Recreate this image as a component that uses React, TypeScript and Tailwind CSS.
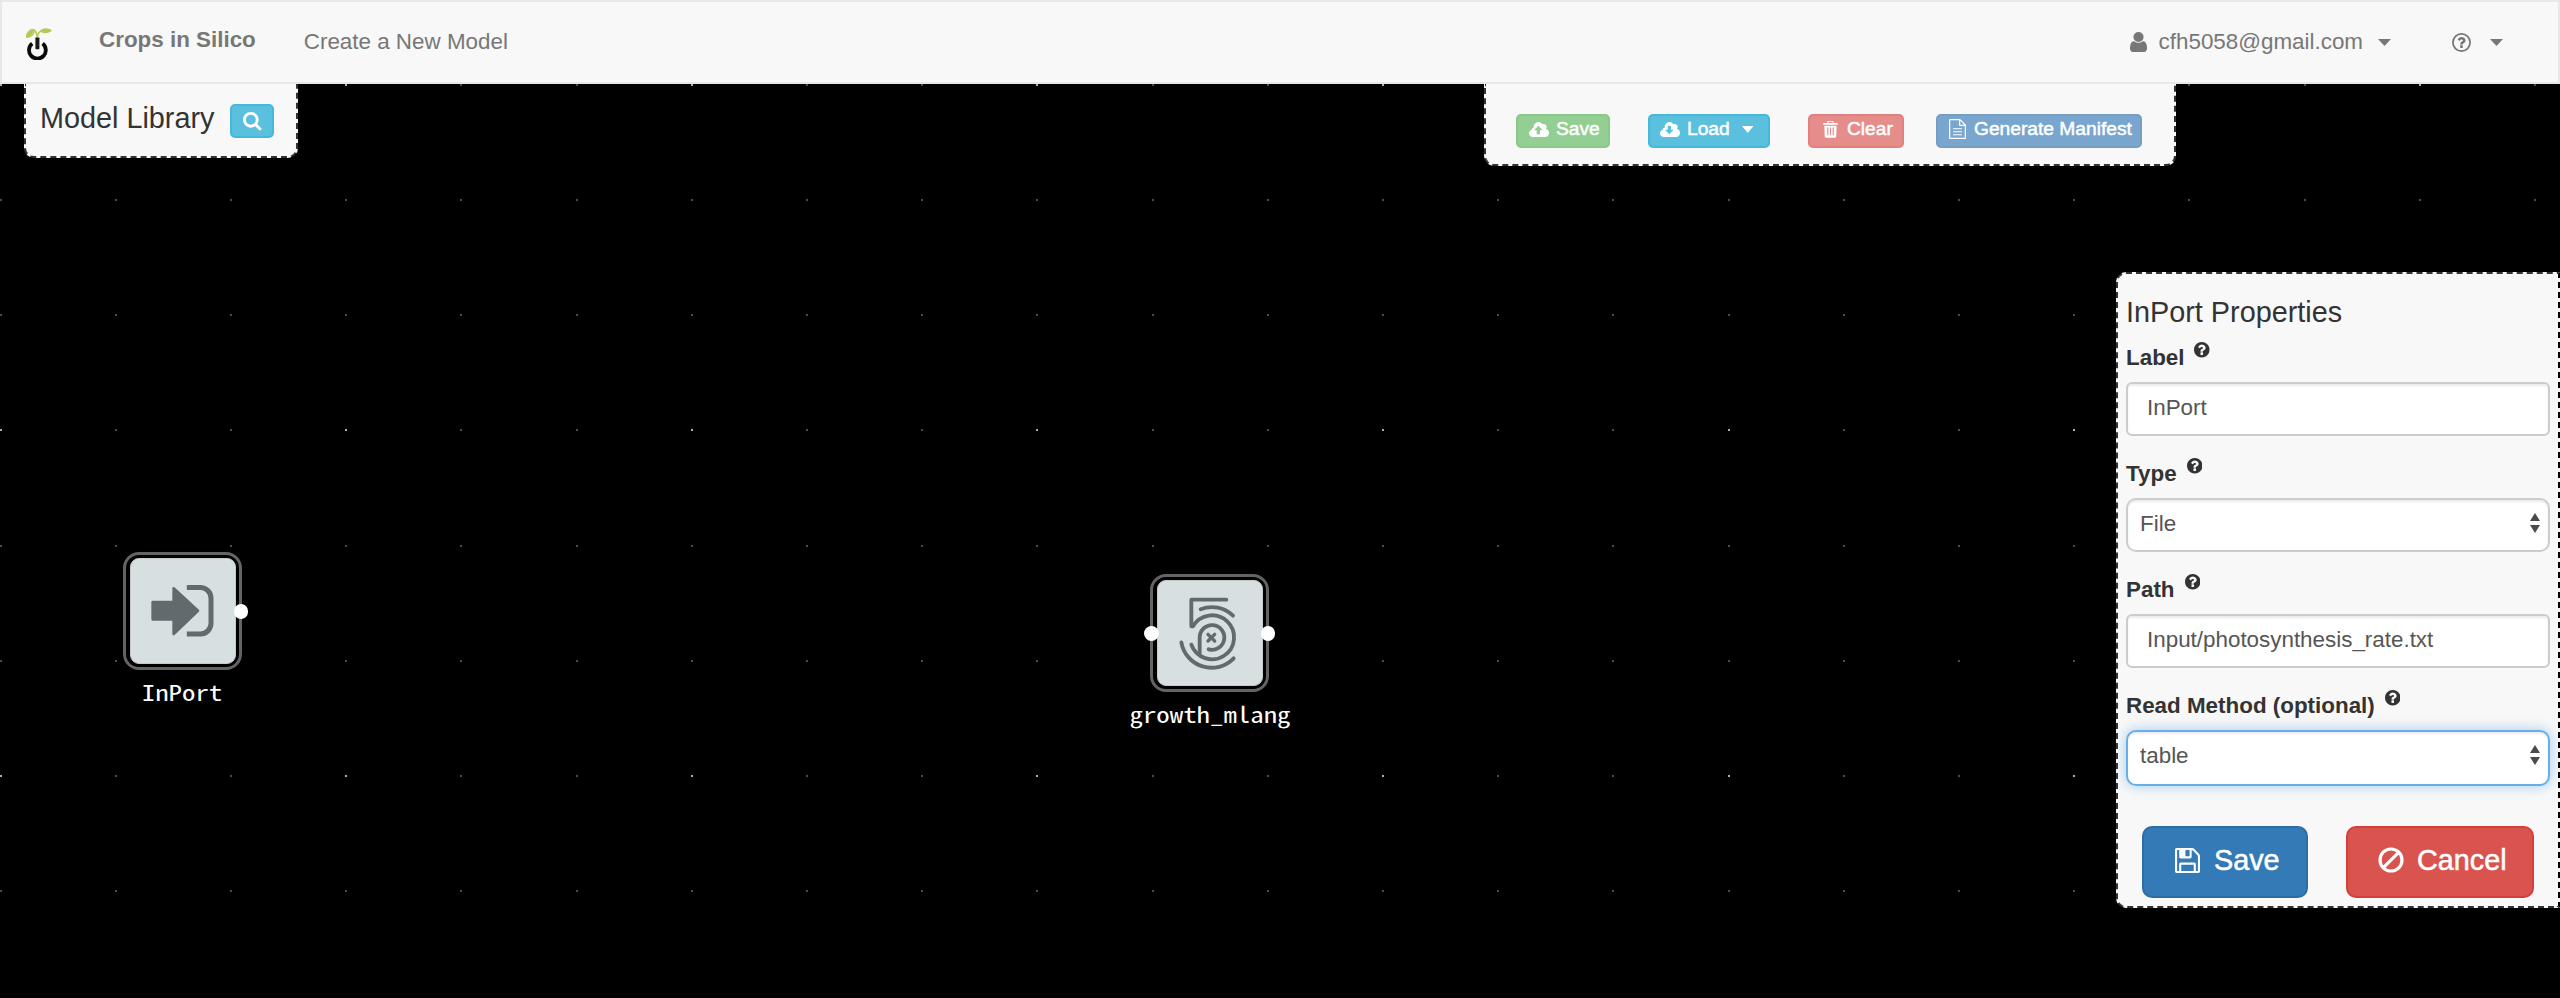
import React from "react";

const SEARCH =
  "M1216 832q0-185-131.5-316.5t-316.5-131.5-316.5 131.5-131.5 316.5 131.5 316.5 316.5 131.5 316.5-131.5 131.5-316.5zm512 832q0 52-38 90t-90 38q-54 0-90-38l-343-342q-179 124-399 124-143 0-273.5-55.5t-225-150-150-225-55.5-273.5 55.5-273.5 150-225 225-150 273.5-55.5 273.5 55.5 225 150 150 225 55.5 273.5q0 220-124 399l343 343q37 37 37 90z";
const USER =
  "M1536 1399q0 109-62.5 187t-150.5 78h-854q-88 0-150.5-78t-62.5-187q0-85 8.5-160.5t31.5-152 58.5-131 94-89 134.5-34.5q131 128 313 128t313-128q76 0 134.5 34.5t94 89 58.5 131 31.5 152 8.5 160.5zm-256-887q0 159-112.5 271.5t-271.5 112.5-271.5-112.5-112.5-271.5 112.5-271.5 271.5-112.5 271.5 112.5 112.5 271.5z";
const QUESTION =
  "M1024 1376v-192q0-14-9-23t-23-9h-192q-14 0-23 9t-9 23v192q0 14 9 23t23 9h192q14 0 23-9t9-23zm256-672q0-88-55.5-163t-138.5-116-170-41q-243 0-371 213-15 24 8 42l132 100q7 6 19 6 16 0 25-12 53-68 86-92 34-24 86-24 48 0 85.5 26t37.5 59q0 38-20 61t-68 45q-63 28-115.5 86.5t-52.5 125.5v36q0 14 9 23t23 9h192q14 0 23-9t9-23q0-19 21.5-49.5t54.5-49.5q32-18 49-28.5t46-35 44.5-48 28-60.5 12.5-81z";
const DISC =
  "M1664 896q0 209-103 385.5t-279.5 279.5-385.5 103-385.5-103-279.5-279.5-103-385.5 103-385.5 279.5-279.5 385.5-103 385.5 103 279.5 279.5 103 385.5z";
const FLOPPY =
  "M512 1536h768v-384h-768v384zm896 0h128v-896q0-14-10-38.5t-20-34.5l-281-281q-10-10-34-20t-39-10v416q0 40-28 68t-68 28h-576q-40 0-68-28t-28-68v-416h-128v1280h128v-416q0-40 28-68t68-28h832q40 0 68 28t28 68v416zm-384-928v-320q0-13-9.5-22.5t-22.5-9.5h-192q-13 0-22.5 9.5t-9.5 22.5v320q0 13 9.5 22.5t22.5 9.5h192q13 0 22.5-9.5t9.5-22.5zm640 32v928q0 40-28 68t-68 28h-1344q-40 0-68-28t-28-68v-1344q0-40 28-68t68-28h928q40 0 88 20t76 48l280 280q28 28 48 76t20 88z";

function Logo() {
  return (
    <svg className="h-8 w-[26px]" viewBox="0 0 26 32">
      <path d="M11.3 11C11.2 6.5 10 3 7.8 1.6 4 1.2.8 5 .2 9.4 4.6 9 7.6 6.6 8.4 2.8M11.3 11C11.3 7.5 12 4.6 15 2.8" fill="none" stroke="#b4c853" strokeWidth="1.4" />
      <path d="M0 9.6C.6 5.8 3.6 2.6 7.6 1.6 7.4 5.6 4.8 8.8 0 9.6zM14 3C16.6-.6 22-.8 26 2.6 22.6 6 17 6.4 14 3z" fill="#b4c853" />
      <path d="M6.2 15.6A8.4 8.4 0 1 0 16.6 15.6" fill="none" stroke="#0a0a0a" strokeWidth="3.8" />
      <rect x="9.4" y="9.6" width="4" height="11.6" rx="0.6" fill="#1a1a1a" />
    </svg>
  );
}

function Caret({ className }: { className: string }) {
  return (
    <svg className={className} viewBox="0 0 12 7" preserveAspectRatio="none">
      <path d="M0 0H12L6 7z" fill="currentColor" />
    </svg>
  );
}

function CloudIcon({ up, cut }: { up: boolean; cut: string }) {
  return (
    <svg className="h-[15px] w-5 shrink-0" viewBox="0 0 60 45">
      <path
        d="M11 45C3 45 0 39 0 34 0 28 4 24 8 23 8 20 10 17 14 17 14 7 20 0 29 0 35 0 38 3 40 7 43 5 53 6 53 15 53 17 52 19 50 20 56 21 60 26 60 32 60 40 55 45 48 45z"
        fill="white"
      />
      <path d={up ? "M28 11L41 25H33V37H23V25H15z" : "M23 11H33V23H41L28 37 15 23H23z"} fill={cut} />
    </svg>
  );
}

function TrashIcon() {
  return (
    <svg className="h-[17px] w-[15px] shrink-0" viewBox="0 0 44 50">
      <path d="M14 7V4Q14 1 17 1H27Q30 1 30 4V7" fill="none" stroke="white" strokeWidth="3" />
      <path d="M0 10Q0 6 4 6H40Q44 6 44 10V11H0zM4 14H40L39 45Q39 49 35 49H9Q5 49 5 45z" fill="white" />
      <path d="M14 19V42M22 19V42M30 19V42" stroke="#e48d8a" strokeWidth="3.4" />
    </svg>
  );
}

function FileIcon() {
  return (
    <svg className="h-5 w-[17px] shrink-0" viewBox="0 0 51 60">
      <path d="M3 2H33L49 18V58H2V3zM32 2V19H49" fill="none" stroke="white" strokeWidth="3.6" strokeLinejoin="round" />
      <path d="M12 29H39M12 38H39M12 47H39" stroke="white" strokeWidth="3.2" />
    </svg>
  );
}

function BanIcon() {
  return (
    <svg className="h-[26px] w-[26px] shrink-0" viewBox="0 0 26 26">
      <circle cx="13" cy="13" r="11" fill="none" stroke="white" strokeWidth="3.2" />
      <path d="M5.4 20.6L20.6 5.4" stroke="white" strokeWidth="3.2" />
    </svg>
  );
}

const GRID = 115.2;

function DotGrid() {
  const dots: React.ReactElement[] = [];
  for (let row = 0; row < 8; row++) {
    for (let col = 0; col < 23; col++) {
      const major = row % 3 === 0 && col % 3 === 0;
      dots.push(
        <rect
          key={`${row}-${col}`}
          x={Math.floor(col * GRID)}
          y={Math.floor(0.2 + row * GRID)}
          width="2"
          height="2"
          fill={major ? "#b0b0b0" : "#4c4c4c"}
        />
      );
    }
  }
  return (
    <svg className="block h-[914px] w-full" viewBox="0 0 2560 914">
      {dots}
    </svg>
  );
}

function Node({ label, place, ports, children }: { label: string; place: string; ports: "out" | "both"; children: React.ReactNode }) {
  return (
    <div className={`absolute flex w-[119px] flex-col items-center ${place}`}>
      <div className="relative flex h-[118px] w-[119px] items-center justify-center rounded-[16px] border-[3px] border-[#646464] bg-black">
        <div className="h-[106px] w-[106px] rounded-[9px] border border-[#c3cacb] bg-[#d8dfe0]">
          <svg className="-m-px block h-[106px] w-[106px]" viewBox="0 0 318 318">
            {children}
          </svg>
        </div>
        {ports === "both" && <span className="absolute -left-[9px] top-[49px] size-[14.5px] rounded-full bg-white" />}
        <span className="absolute -right-[9px] top-[49px] size-[14.5px] rounded-full bg-white" />
      </div>
      <div className="mt-[6px] scale-x-[1.22] whitespace-nowrap font-['Noto_Sans_Mono_CJK_SC','Liberation_Mono',monospace] text-[22px] leading-[30px] text-white">{label}</div>
    </div>
  );
}

function FieldLabel({ text }: { text: string }) {
  return (
    <div className="flex h-8 items-start gap-[10px]">
      <label className="text-[22.4px] font-bold leading-8">{text}</label>
      <svg className="size-[15.5px]" viewBox="128 128 1536 1536">
        <path d={DISC} fill="#333" />
        <path d={QUESTION} fill="#f8f8f8" />
      </svg>
    </div>
  );
}

function TextField({ label, value }: { label: string; value: string }) {
  return (
    <div className="flex flex-col gap-2">
      <FieldLabel text={label} />
      <input
        defaultValue={value}
        className="h-[54px] w-full rounded-[6px] border-2 border-[#ccc] bg-white pb-0.5 pl-[19px] text-[22.4px] text-[#555] shadow-[inset_0_2px_2px_rgba(0,0,0,0.075)] outline-none"
      />
    </div>
  );
}

function SelectField({ label, value, focused }: { label: string; value: string; focused?: boolean }) {
  return (
    <div className="flex flex-col gap-2">
      <FieldLabel text={label} />
      <div
        className={
          focused
            ? "flex h-14 items-center justify-between rounded-[10px] border-2 border-[#66afe9] bg-white pb-1 pl-3 pr-[8.5px] shadow-[inset_0_2px_2px_rgba(0,0,0,0.075),0_0_13px_rgba(102,175,233,0.6)]"
            : "flex h-[54px] items-center justify-between rounded-[10px] border-2 border-[#ccc] bg-white pb-0.5 pl-3 pr-[8.5px] shadow-[inset_0_2px_2px_rgba(0,0,0,0.075)]"
        }
      >
        <span className="text-[22.4px] leading-8 text-[#555]">{value}</span>
        <svg className="-mt-[2px] h-5 w-[10px]" viewBox="0 0 10 20">
          <path d="M0 8L5 0 10 8zM0 12H10L5 20z" fill="#4a4a4a" />
        </svg>
      </div>
    </div>
  );
}

const smallButton =
  "flex h-[34px] items-center rounded-[5px] border-2 pb-1 text-[19.2px] leading-7 text-white [-webkit-text-stroke:0.5px_white]";

export default function App() {
  return (
    <div className="flex h-[998px] w-[2560px] flex-col overflow-hidden bg-black font-['Liberation_Sans',Arial,sans-serif] text-[#333]">
      <nav className="flex h-[84px] shrink-0 items-start border-2 border-[#e7e7e7] bg-[#f8f8f8] text-[22.4px] leading-8 text-[#777]">
        <div className="pl-6 pt-[26px]">
          <Logo />
        </div>
        <div className="ml-[47px] mt-[22px] font-bold">Crops in Silico</div>
        <div className="ml-12 mt-6">Create a New Model</div>
        <div className="ml-auto mr-[55px] mt-6 flex h-8 items-center">
          <svg className="mr-3 h-5 w-[17px]" viewBox="256 128 1280 1536" preserveAspectRatio="none">
            <path d={USER} fill="currentColor" />
          </svg>
          <span>cfh5058@gmail.com</span>
          <Caret className="ml-[15px] h-[7px] w-[13px]" />
          <svg className="ml-[61px] size-[19px]" viewBox="128 128 1536 1536">
            <circle cx="896" cy="896" r="694" fill="none" stroke="currentColor" strokeWidth="140" />
            <g transform="translate(134 134) scale(0.85)">
              <path d={QUESTION} fill="currentColor" />
            </g>
          </svg>
          <Caret className="ml-[19px] h-[7px] w-[13px]" />
        </div>
      </nav>

      <main className="relative flex-1">
        <DotGrid />

        <Node label="InPort" place="left-[123px] top-[468px]" ports="out">
          <path d="M68 132H131V91L204 158 131 228V184H68z" fill="#616b6d" stroke="#616b6d" strokeWidth="8" strokeLinejoin="round" />
          <path d="M178 88.5H211A32 32 0 0 1 243 120.5V196A32 32 0 0 1 211 228H178" fill="none" stroke="#616b6d" strokeWidth="15" strokeLinecap="square" />
        </Node>
        <Node label="growth_mlang" place="left-[1150px] top-[490px]" ports="both">
          <g fill="none" stroke="#616b6d" strokeWidth="11.5" strokeLinecap="round" strokeLinejoin="round">
            <path d="M208 59H103V139H108A66 66 0 1 1 103 194" />
            <path d="M131 88A90 90 0 0 1 228 107" />
            <path d="M73 187A92 92 0 0 0 230 235" />
            <path d="M128 222V172A37 37 0 1 1 155 208" />
            <path d="M153 163L173 183M173 163L153 183" strokeWidth="10" />
          </g>
        </Node>

        <section className="absolute left-6 top-0 flex h-[74px] w-[274px] items-start rounded-b-[10px] border-2 border-t-0 border-dashed border-[#333] bg-[#f8f8f8] pl-[14px]">
          <h4 className="mt-[18px] w-[190px] text-[28.8px] leading-8">Model Library</h4>
          <button className="mt-5 flex h-[34px] w-11 items-center justify-center rounded-[5px] border-2 border-[#46b8da] bg-[#5bc0de]">
            <svg className="ml-px mt-px size-[18.5px]" viewBox="64 128 1664 1664">
              <path d={SEARCH} fill="white" />
            </svg>
          </button>
        </section>

        <section className="absolute left-[1484px] top-0 flex h-[82px] w-[692px] items-start rounded-b-[10px] border-2 border-t-0 border-dashed border-[#333] bg-[#f8f8f8] pl-[30px] pt-[30px]">
          <button className={`${smallButton} w-[94px] gap-[7px] border-[#88c888] bg-[#93ce93] pl-[11px]`}>
            <CloudIcon up cut="#93ce93" />
            Save
          </button>
          <button className={`${smallButton} ml-[38px] w-[122px] gap-[7px] border-[#46b8da] bg-[#5bc0de] pl-[10px]`}>
            <CloudIcon up={false} cut="#5bc0de" />
            Load
            <Caret className="ml-[5px] h-[7px] w-[11.5px]" />
          </button>
          <button className={`${smallButton} ml-[38px] w-24 gap-[9px] border-[#e1807d] bg-[#e48d8a] pl-[13px]`}>
            <TrashIcon />
            Clear
          </button>
          <button className={`${smallButton} ml-8 w-[206px] gap-2 whitespace-nowrap border-[#759ec1] bg-[#78a6ce] pl-[11px]`}>
            <FileIcon />
            Generate Manifest
          </button>
        </section>

        <section className="absolute left-[2116px] top-[188px] flex h-[636px] w-[444px] flex-col rounded-l-[10px] border-2 border-dashed border-[#333] border-r-black bg-[#f8f8f8] px-2 pt-[22px]">
          <h4 className="text-[28.8px] leading-8">InPort Properties</h4>
          <div className="mt-[14px] flex flex-col gap-[22px]">
            <TextField label="Label" value="InPort" />
            <SelectField label="Type" value="File" />
            <TextField label="Path" value="Input/photosynthesis_rate.txt" />
            <SelectField label="Read Method (optional)" value="table" focused />
          </div>
          <div className="mt-10 flex px-4 text-[28.8px] leading-8 text-white [-webkit-text-stroke:0.5px_white]">
            <button className="flex h-[72px] w-[166px] items-center gap-[14px] rounded-[10px] border-2 border-[#2e6da4] bg-[#337ab7] pb-1 pl-[31px]">
              <svg className="size-[25px] shrink-0" viewBox="128 128 1536 1536">
                <path d={FLOPPY} fill="white" />
              </svg>
              Save
            </button>
            <button className="ml-[38px] flex h-[72px] w-[188px] items-center gap-[13px] rounded-[10px] border-2 border-[#d43f3a] bg-[#d9534f] pb-1 pl-[30px]">
              <BanIcon />
              Cancel
            </button>
          </div>
        </section>
      </main>
    </div>
  );
}
